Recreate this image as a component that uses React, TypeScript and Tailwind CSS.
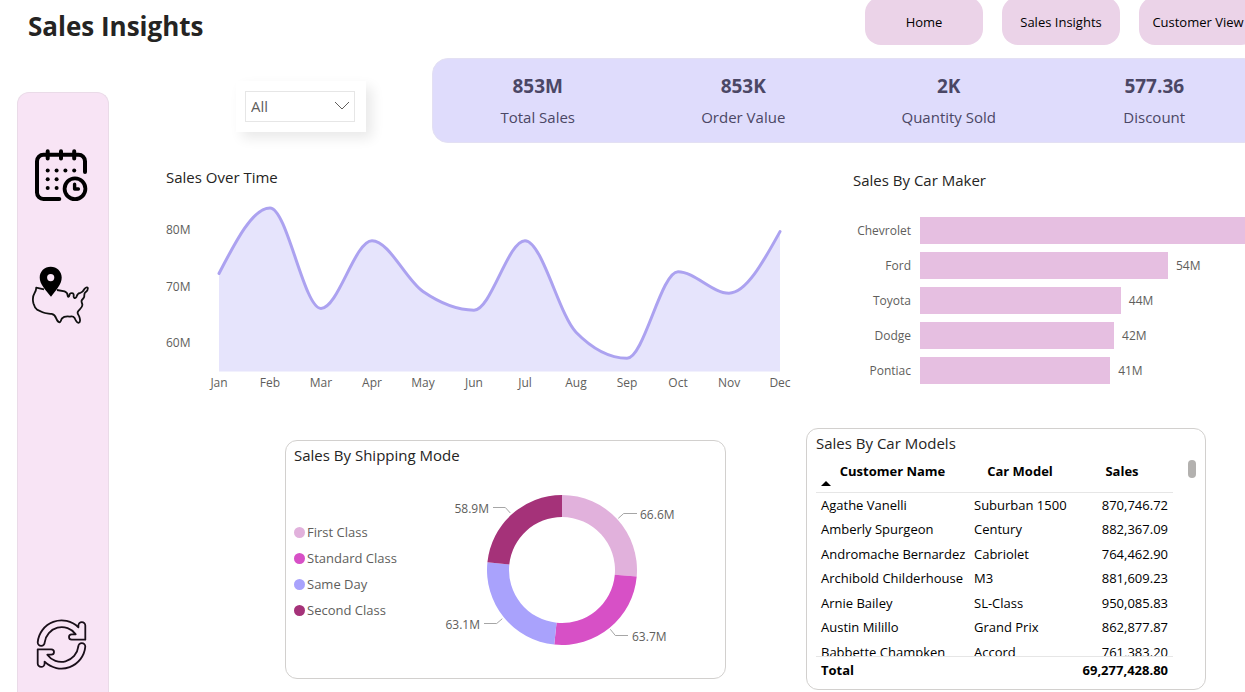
const MONTHS = ["Jan", "Feb", "Mar", "Apr", "May", "Jun", "Jul", "Aug", "Sep", "Oct", "Nov", "Dec"];
const MONTHLY = [72.4, 84, 66.2, 78.2, 69.2, 65.9, 78.2, 62, 57.4, 72.7, 68.9, 79.8];

const NAV = ["Home", "Sales Insights", "Customer View"];

const KPIS = [
  { value: "853M", label: "Total Sales" },
  { value: "853K", label: "Order Value" },
  { value: "2K", label: "Quantity Sold" },
  { value: "577.36", label: "Discount" },
];

const MAKERS = [
  { name: "Chevrolet", label: "", share: 110 },
  { name: "Ford", label: "54M", share: 76.3 },
  { name: "Toyota", label: "44M", share: 61.8 },
  { name: "Dodge", label: "42M", share: 59.7 },
  { name: "Pontiac", label: "41M", share: 58.5 },
];

const SHIPPING = [
  { name: "First Class", value: 66.6, color: "#e1b1dc" },
  { name: "Standard Class", value: 63.7, color: "#d750c6" },
  { name: "Same Day", value: 63.1, color: "#a9a2fc" },
  { name: "Second Class", value: 58.9, color: "#a53279" },
];

const CUSTOMERS = [
  ["Agathe Vanelli", "Suburban 1500", "870,746.72"],
  ["Amberly Spurgeon", "Century", "882,367.09"],
  ["Andromache Bernardez", "Cabriolet", "764,462.90"],
  ["Archibold Childerhouse", "M3", "881,609.23"],
  ["Arnie Bailey", "SL-Class", "950,085.83"],
  ["Austin Milillo", "Grand Prix", "862,877.87"],
  ["Babbette Champken", "Accord", "761,383.20"],
];

/** Monotone cubic interpolation through equally spaced points. */
function smoothPath(pts: { x: number; y: number }[]): string {
  const n = pts.length;
  const slope = (i: number) => (pts[i + 1].y - pts[i].y) / (pts[i + 1].x - pts[i].x);
  const m: number[] = new Array(n).fill(0);
  for (let i = 1; i < n - 1; i++) {
    const a = slope(i - 1);
    const b = slope(i);
    m[i] = (Math.sign(a) + Math.sign(b)) * Math.min(Math.abs(a), Math.abs(b), Math.abs(a + b) / 4);
  }
  m[0] = (3 * slope(0) - m[1]) / 2;
  m[n - 1] = (3 * slope(n - 2) - m[n - 2]) / 2;
  let d = `M${pts[0].x},${pts[0].y}`;
  for (let i = 0; i < n - 1; i++) {
    const dx = (pts[i + 1].x - pts[i].x) / 3;
    d += `C${pts[i].x + dx},${pts[i].y + dx * m[i]} ${pts[i + 1].x - dx},${pts[i + 1].y - dx * m[i + 1]} ${pts[i + 1].x},${pts[i + 1].y}`;
  }
  return d;
}

function CalendarIcon() {
  return (
    <svg viewBox="0 0 56 56" className="size-14" fill="none" stroke="#000" strokeWidth="4" strokeLinecap="round" strokeLinejoin="round" aria-hidden="true">
      <path d="M26.3 52H10.5A6.5 6.5 0 0 1 4 45.5V14.2A6.5 6.5 0 0 1 10.5 7.7H45.5A6.5 6.5 0 0 1 52 14.2V25" />
      <path d="M14.7 4.2V11.6M28 4.2V11.6M41.2 4.2V11.6" />
      <circle cx="42" cy="41.7" r="10.4" strokeWidth="3.8" />
      <path d="M41.6 37.2V42H45.4" strokeWidth="3.4" />
      <g fill="#000" stroke="none">
        <circle cx="14.7" cy="23.4" r="2" />
        <circle cx="23.6" cy="23.4" r="2" />
        <circle cx="32.4" cy="23.4" r="2" />
        <circle cx="41.2" cy="23.4" r="2" />
        <circle cx="14.7" cy="32.2" r="2" />
        <circle cx="23.6" cy="32.2" r="2" />
        <circle cx="14.7" cy="41" r="2" />
        <circle cx="23.6" cy="41" r="2" />
      </g>
    </svg>
  );
}

function MapIcon() {
  return (
    <svg viewBox="1 0 60 60" className="size-[60px]" aria-hidden="true">
      <path
        d="M14 24.4L6.2 22.6C6.4 25 5.6 26.4 4.6 28C2.4 31.5 2.6 35 3.4 38.2C4.2 41 4.6 43 7 44.6L12.6 47.3C15 48.6 18.4 48.4 21.6 48.9C24.6 49.4 25.4 51.2 26.2 53.4C27 55.6 27.8 57 29.6 57.4C31 57.4 30.8 54.8 32 53.4C33.4 51.8 36.6 51.2 39.8 51.6C41.8 51 43.6 51.4 44.6 53C45.4 55 46.6 57.6 48.6 57.8C50.6 57.4 50.2 54.6 49.4 52C48.6 49.6 47 48.8 47.8 46.8C48.8 44.4 52.2 43.4 52.4 40C52.4 38.4 51.2 37.2 51.6 35.6C52.2 34 53.8 33.8 54.2 31.8C54.4 30 54 28.6 55.2 27.4C56.4 26.4 58.2 25.6 57.8 22.9C57.2 21.8 55.4 22.6 54.4 24C53.4 26 52.6 27.4 50.4 27.8C48.4 28 47.4 29 46.8 31C46.4 32.4 45.6 33.4 44.2 32.8C42.6 31.6 44.8 29.6 43 28.4C41.4 27.6 39.6 28.2 39.4 30.4C39.2 32.2 37.8 32.2 37.6 30.6C37.8 28.4 36.4 27.2 34.6 26.4L27 25"
        fill="none"
        stroke="#111"
        strokeWidth="1.8"
        strokeLinejoin="round"
      />
      <path
        fillRule="evenodd"
        d="M20.7 1.7C26.8 1.7 31.7 6.4 31.7 12.4C31.7 19.5 26.2 24.5 21 31.7C15.6 24.5 9.7 19.5 9.7 12.4C9.7 6.4 14.6 1.7 20.7 1.7ZM20.7 9A3.6 3.6 0 1 0 20.7 16.2A3.6 3.6 0 1 0 20.7 9Z"
        fill="#000"
      />
    </svg>
  );
}

function RefreshIcon() {
  const half =
    "M3.7 24.3A24 24 0 0 1 44.4 9.3V7.6A3.4 3.4 0 0 1 51.3 7.6V21.7H37.7A2.7 2.7 0 0 1 37.7 16.3H41.7A17.2 17.2 0 0 0 10.7 24.3A3.5 3.5 0 0 1 3.7 24.3Z";
  return (
    <svg viewBox="0 0 55 54" className="h-[54px] w-[55px]" fill="none" stroke="#1a0f1a" strokeWidth="1.8" strokeLinejoin="round" aria-hidden="true">
      <path d={half} />
      <path d={half} transform="rotate(180 27.5 26.5)" />
    </svg>
  );
}

function SalesOverTime() {
  const pts = MONTHLY.map((v, i) => ({ x: 53 + i * 51, y: 41.5 + (80 - v) * 5.65 }));
  const line = smoothPath(pts);
  return (
    <svg viewBox="0 0 630 206" className="block w-full" role="img" aria-label="Sales over time">
      <path d={`${line}V182.5H53Z`} fill="#e6e4fc" />
      <path d={line} fill="none" stroke="#aca2f0" strokeWidth="3" strokeLinecap="round" />
      <g fontSize="12" fill="#605e5c">
        {["80M", "70M", "60M"].map((t, i) => (
          <text key={t} x="0" y={45 + i * 56.5}>
            {t}
          </text>
        ))}
        {MONTHS.map((m, i) => (
          <text key={m} x={53 + i * 51} y="198" textAnchor="middle">
            {m}
          </text>
        ))}
      </g>
    </svg>
  );
}

function ShippingDonut() {
  const total = SHIPPING.reduce((s, d) => s + d.value, 0);
  const cx = 122;
  const cy = 100;
  let start = 0;
  const arcs = SHIPPING.map((d) => {
    const a0 = (start / total) * 2 * Math.PI;
    start += d.value;
    const a1 = (start / total) * 2 * Math.PI;
    const p = (r: number, a: number) => `${cx + r * Math.sin(a)} ${cy - r * Math.cos(a)}`;
    return {
      color: d.color,
      path: `M${p(75, a0)}A75 75 0 0 1 ${p(75, a1)}L${p(53, a1)}A53 53 0 0 0 ${p(53, a0)}Z`,
    };
  });
  return (
    <svg viewBox="0 0 250 200" className="h-[200px] w-[250px]" role="img" aria-label="Sales by shipping mode">
      {arcs.map((a) => (
        <path key={a.color} d={a.path} fill={a.color} />
      ))}
      <g fill="none" stroke="#a6a6a6" strokeWidth="1">
        <path d="M53 37.5H65.3L70.3 43" />
        <path d="M178.3 48.3L183.7 43.5H197" />
        <path d="M170.3 159.3L175.3 165.5H188" />
        <path d="M62.3 148.7L56.7 153.5H44" />
      </g>
      <g fontSize="12" fill="#605e5c">
        <text x="49" y="43" textAnchor="end">58.9M</text>
        <text x="200" y="49">66.6M</text>
        <text x="192" y="171">63.7M</text>
        <text x="40" y="159" textAnchor="end">63.1M</text>
      </g>
    </svg>
  );
}

export default function App() {
  return (
    <div className="flex min-h-screen flex-col overflow-hidden bg-white font-['Open_Sans','Noto_Sans',sans-serif] text-[#252423]">
      <header className="flex h-12 items-start justify-between pl-7">
        <h1 className="pt-2 text-[26px] leading-9 font-bold">Sales Insights</h1>
        <nav className="-mt-[3px] -mr-3 flex gap-[19px]">
          {NAV.map((n) => (
            <button key={n} type="button" className="h-12 w-[118px] rounded-2xl bg-[#ebd3e8] pt-1 text-[13px] whitespace-nowrap text-black">
              {n}
            </button>
          ))}
        </nav>
      </header>

      <div className="flex flex-1">
        <aside className="mt-11 ml-[17px] flex w-[92px] shrink-0 flex-col items-center rounded-t-xl border border-b-0 border-[#eadbe8] bg-[#f8e4f5] pt-[54px] pb-5">
          <button type="button" aria-label="Calendar" className="-ml-1">
            <CalendarIcon />
          </button>
          <button type="button" aria-label="Map" className="mt-[62px] -ml-1">
            <MapIcon />
          </button>
          <button type="button" aria-label="Refresh" className="mt-auto -ml-1">
            <RefreshIcon />
          </button>
        </aside>

        <main className="min-w-0 flex-1 pt-2.5 pb-0.5 pl-[57px]">
          <section className="flex items-start">
            <div className="mt-[23px] ml-[70px] w-[130px] bg-white py-2.5 pr-[11px] pl-[9px] shadow-[6px_6px_12px_rgba(0,0,0,0.09)]">
              <div className="relative">
                <select aria-label="Month" className="h-[31px] w-full appearance-none border border-[#e6e6e6] bg-white pl-[5px] text-[15px] text-[#605e5c]">
                  <option>All</option>
                </select>
                <svg viewBox="0 0 16 10" className="pointer-events-none absolute top-2.5 right-[5px] h-2.5 w-4" fill="none" stroke="#605e5c" strokeWidth="1" aria-hidden="true">
                  <path d="M1 1L8 8L15 1" />
                </svg>
              </div>
            </div>
            <dl className="-mr-[15px] ml-[66px] grid h-[85px] flex-1 grid-cols-4 rounded-2xl border border-[#e3e0f3] bg-[#dfdcfc] px-0.5 text-center text-[#4b4765]">
              {KPIS.map((k) => (
                <div key={k.label} className="flex flex-col-reverse justify-end pt-[15px]">
                  <dt className="mt-[7px] text-[15px] leading-6">{k.label}</dt>
                  <dd className="text-[19px] leading-6 font-bold">{k.value}</dd>
                </div>
              ))}
            </dl>
          </section>

          <section className="flex">
            <div className="min-w-0 flex-1 pt-[23px] pr-[57px]">
              <h2 className="mb-px text-[15px] leading-[22px]">Sales Over Time</h2>
              <SalesOverTime />
            </div>
            <div className="w-[392px] shrink-0 pt-[26px]">
              <h2 className="text-[15px] leading-[22px]">Sales By Car Maker</h2>
              <ul className="mt-[26px] flex flex-col gap-2">
                {MAKERS.map((m) => (
                  <li key={m.name} className="flex h-[27px] items-center text-[12px] text-[#605e5c]">
                    <span className="w-[58px] shrink-0 text-right">{m.name}</span>
                    <span className="ml-[9px] flex h-full min-w-0 flex-1 items-center">
                      <span className="h-full shrink-0 bg-[#e6bfe1]" style={{ width: `${m.share}%` }} />
                      <span className="ml-2">{m.label}</span>
                    </span>
                  </li>
                ))}
              </ul>
            </div>
          </section>

          <section className="mt-[33px] grid grid-cols-[441fr_400fr] items-start gap-20 pr-[39px] pl-[119px]">
            <div className="mt-3 min-w-0 rounded-xl border border-[#d2d0ce] px-2 pt-[3px] pb-2">
              <h2 className="text-[15px] leading-[22px]">Sales By Shipping Mode</h2>
              <div className="flex items-start">
                <ul className="mt-[53px] w-[146px] shrink-0 text-[13px] leading-[26px] text-[#605e5c]">
                  {SHIPPING.map((s) => (
                    <li key={s.name} className="flex items-center gap-0.5">
                      <span className="size-[11px] rounded-full" style={{ backgroundColor: s.color }} />
                      {s.name}
                    </li>
                  ))}
                </ul>
                <div className="mt-1">
                  <ShippingDonut />
                </div>
              </div>
            </div>

            <div className="min-w-0 rounded-xl border border-[#d2d0ce] pt-[3px] pr-[9px] pb-[5px] pl-[9px]">
              <h2 className="text-[15px] leading-[22px]">Sales By Car Models</h2>
              <div className="mt-1.5 flex justify-between">
                <div className="h-[224px] w-[357px] overflow-y-auto [scrollbar-width:none]">
                  <table className="w-full table-fixed border-separate border-spacing-0 text-[13px] text-black">
                    <colgroup>
                      <col className="w-[153px]" />
                      <col />
                      <col />
                    </colgroup>
                    <thead>
                      <tr className="h-[33px] align-top leading-[22px]">
                        <th className="sticky top-0 border-b border-[#e6e6e6] bg-white font-bold">
                          Customer Name
                          <svg viewBox="0 0 10 5" className="absolute bottom-1.5 left-[5px] h-[5px] w-2.5" aria-hidden="true">
                            <path d="M0 5L5 0L10 5Z" fill="#000" />
                          </svg>
                        </th>
                        <th className="sticky top-0 border-b border-[#e6e6e6] bg-white font-bold">Car Model</th>
                        <th className="sticky top-0 border-b border-[#e6e6e6] bg-white font-bold">Sales</th>
                      </tr>
                    </thead>
                    <tbody>
                      {CUSTOMERS.map(([name, model, sales]) => (
                        <tr key={name} className="whitespace-nowrap odd:h-[25px] even:h-6">
                          <td className="pl-[5px]">{name}</td>
                          <td className="pl-[5px]">{model}</td>
                          <td className="pr-[5px] text-right">{sales}</td>
                        </tr>
                      ))}
                    </tbody>
                    <tfoot>
                      <tr className="h-7 font-bold">
                        <td className="sticky bottom-0 border-t border-[#e6e6e6] bg-white pl-[5px]">Total</td>
                        <td colSpan={2} className="sticky bottom-0 border-t border-[#e6e6e6] bg-white pr-[5px] text-right">
                          69,277,428.80
                        </td>
                      </tr>
                    </tfoot>
                  </table>
                </div>
                <div className="h-[18px] w-2 rounded-full bg-[#b3b1af]" />
              </div>
            </div>
          </section>
        </main>
      </div>
    </div>
  );
}
